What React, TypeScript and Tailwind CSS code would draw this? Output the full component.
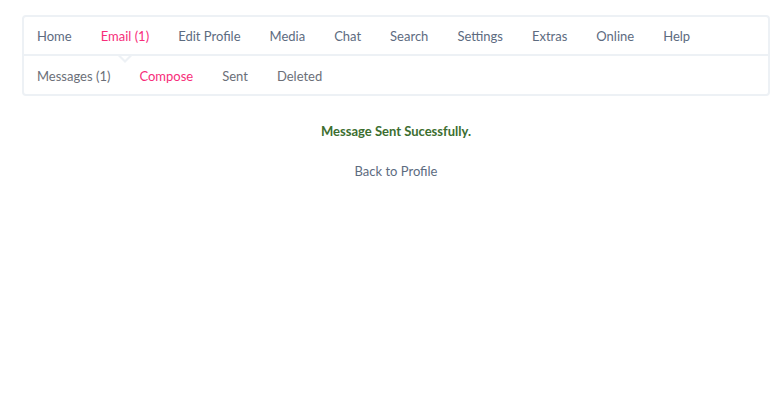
import React from "react";

const top = ["Home", "Email (1)", "Edit Profile", "Media", "Chat", "Search", "Settings", "Extras", "Online", "Help"];
const sub = ["Messages (1)", "Compose", "Sent", "Deleted"];

export default function App() {
  return (
    <div className="w-[784px] h-[410px] bg-white pt-[15px] px-[22px]" style={{ fontFamily: "Lato, 'Open Sans', sans-serif" }}>
      <div className="w-[748px] border-2 border-[#edf1f5] rounded-[4px]">
        <div className="flex h-[37px] items-center gap-[29px] pl-[13px] pt-[2px] text-[13px]">
          {top.map((t) => (
            <span key={t} className={t === "Email (1)" ? "text-[#f72d7a]" : "text-[#5d6b7f]"}>{t}</span>
          ))}
        </div>
        <div className="relative border-t-2 border-[#edf1f5]">
          <svg className="absolute left-[94px] top-0" width="14" height="8" viewBox="0 0 14 8">
            <polygon points="0,0 14,0 7,7" fill="#edf1f5" />
            <polygon points="3,0 11,0 7,4" fill="#ffffff" />
          </svg>
          <div className="flex h-[38px] items-center gap-[29px] pl-[13px] pt-[3px] text-[13px]">
            {sub.map((t) => (
              <span key={t} className={t === "Compose" ? "text-[#f72d7a]" : "text-[#6b6f78]"}>{t}</span>
            ))}
          </div>
        </div>
      </div>
      <div className="w-[748px] flex flex-col items-center">
        <div className="mt-[26px] text-[13px] font-bold text-[#3c6e2f]">Message Sent Sucessfully.</div>
        <div className="mt-[20px] text-[13px] text-[#5d6b7f]">Back to Profile</div>
      </div>
    </div>
  );
}
